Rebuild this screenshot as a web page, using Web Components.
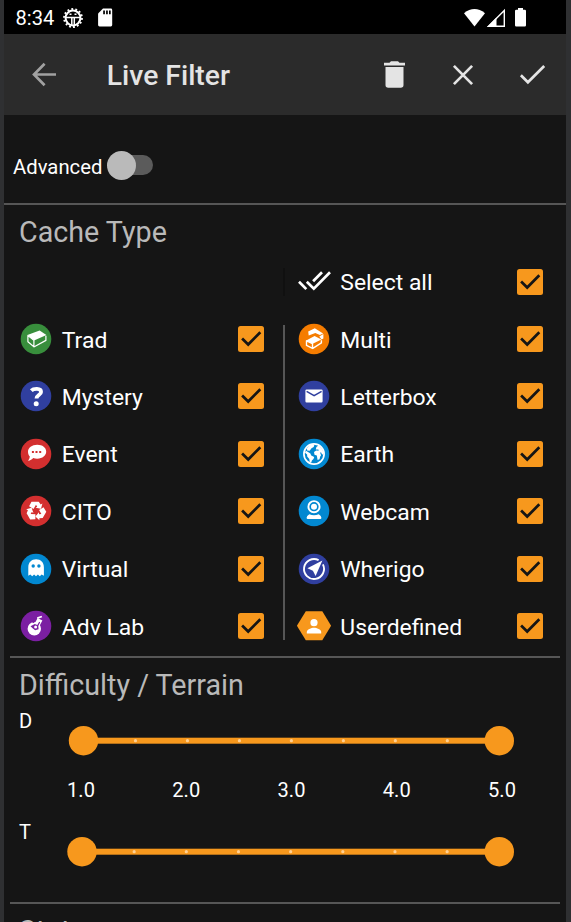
<!DOCTYPE html>
<html lang="en">
<head>
<meta charset="utf-8">
<title>Live Filter</title>
<style>
html,body{margin:0;height:100%;background:#151515}
body{font-family:Roboto,"Liberation Sans",sans-serif;color:#fff;overflow:hidden}
</style>
</head>
<body>
<filter-screen></filter-screen>
<script>
const define = (name, html, setup) => customElements.define(name, class extends HTMLElement {
  connectedCallback() {
    if (this.shadowRoot) return;
    const root = this.attachShadow({ mode: 'open' });
    const t = document.createElement('template');
    t.innerHTML = html;
    root.append(t.content.cloneNode(true));
    if (setup) setup(this, root);
  }
});

const ARROW = 'M11.5 6.7h7.2l2 2.7 1.7-1-1.4 5.4-5.4-1 1.6-1-1.2-2-2.5 4.1-4.4-2.6z';
const ICONS = {
  trad: ['#388e3c', '<path fill="#fff" d="M7.4 12 19.6 7.4l6.8 4.5-12.3 5.5z"/><path fill="none" stroke="#fff" stroke-width="1.2" stroke-linejoin="round" d="M7.900 12.600v6.200l6 5v-6.400zM14.300 23.800l11.600-6.400v-4.600"/>'],
  multi: ['#f57c00', '<path fill="#fff" d="m10.200 8.500 6.600-3.200 8.300 5.200-3.200 1.600-4.600-2-6.600 2.300zM8.200 17.400 16.600 13l6.800 3.600-8.700 4.100z"/><path fill="#fff" d="M21.300 13.400 25.400 11v4.400l-1.800 1.200z"/><path fill="none" stroke="#fff" stroke-width="1.400" stroke-linejoin="round" d="M8.500 17.800v4.600l6 3v-4.800zM14.800 25.300l8.600-5.400v-2.600"/>'],
  mystery: ['#303f9f', '<path fill="none" stroke="#fff" stroke-width="3.900" d="M11.300 10.700c2.200-2.300 9.700-3 9.700 1.200 0 3.300-4.500 3-4.500 6.700"/><circle cx="16.200" cy="23.700" r="2.500" fill="#fff"/>'],
  letterbox: ['#303f9f', '<path fill="#fff" d="M8.600 9.400h14.800q1.200 0 1.200 1.200v10.600q0 1.200-1.200 1.200H8.600q-1.200 0-1.200-1.200V10.600q0-1.200 1.200-1.200z"/><path fill="none" stroke="#303f9f" stroke-width="1.500" d="m8.600 11.300 7.500 4.300 7.500-4.300"/>'],
  event: ['#d32f2f', '<path fill="#fff" d="M17.200 6.800c5.300 0 9 2.900 9 6.800s-3.700 7.100-9 7.100c-1.500 0-2.800-.2-4-.6-1.100 1.400-2.900 2.500-5.200 2.700 1.100-1.200 1.700-2.700 1.800-4.200-1.300-1.200-1.800-3-1.800-5 0-3.800 4-6.800 9.200-6.800z"/><path fill="#d32f2f" d="M11.900 13h2v2h-2zM15.500 13h2v2h-2zM19.200 13h2v2h-2z"/>'],
  earth: ['#0288d1', '<circle cx="16" cy="16" r="10.100" fill="none" stroke="#fff" stroke-width="1.700"/><path fill="#fff" d="m8 12.800 4.400 2.700.8 2.100 3 1.400-.7 2-1.600 1.600-.7 2.200-1.500-.4-.4-3.400-2.100-2.600-.1-2L7 14.800zM9 10l3-2.700 2-1 2.500.3-.8 2.400-2.200 1.200-1.800 2.500-2.600-.1zM18.400 9.100l2.400-1.800 3.800 4.300.8 4.700-1.300.3-1.100-2.400-.9.5 1 2.500-.9 1.300-.7 2.700-1.900.7-.8-4.500-2.300-.7-.5-2.600 2.200-1.700 2.500.4-.3-1.300-2.600-.1z"/>'],
  cito: ['#d32f2f', [0, 120, 240].map(r => `<path fill="#fff" d="${ARROW}" transform="rotate(${r} 16 16)"/>`).join('')],
  webcam: ['#0288d1', '<circle cx="16" cy="11.700" r="5.600" fill="none" stroke="#fff" stroke-width="1.900"/><circle cx="16" cy="11.700" r="3" fill="#fff"/><path fill="#fff" d="M11.300 19.200q4.700 2 9.400 0 2.700 1.500 2.700 3.600 0 1.200-1.200 1.200H9.800q-1.200 0-1.200-1.200 0-2.100 2.700-3.600z"/>'],
  virtual: ['#0288d1', '<path fill="#fff" d="M8.300 22.800V14.500c0-5.200 3.200-8.200 7.800-8.200s7.800 3 7.800 8.200v8.300l-2.300-1.300-1.800 1.700-1.900-1.700-1.900 1.700-1.900-1.700-1.900 1.700-1.900-1.700z"/><circle cx="13.200" cy="13" r="1.700" fill="#0288d1"/><circle cx="18.900" cy="13" r="1.700" fill="#0288d1"/>'],
  wherigo: ['#303f9f', '<path fill="none" stroke="#fff" stroke-width="1.900" d="M20.600 7.100A10 10 0 1 0 24.900 11.400"/><path fill="#fff" d="M24.400 7.600 17.600 23l-2.700-5.200-5.500-2.500z"/>'],
  lab: ['#7b1fa2', '<circle cx="14.300" cy="18.700" r="6.700" fill="#fff"/><path fill="none" stroke="#fff" stroke-width="5.400" d="M15.500 17.600 20 9.300"/><path fill="none" stroke="#fff" stroke-width="1.700" d="m17.300 8.100 4.600-1.600"/><path fill="#7b1fa2" d="m10.500 16.200 4.300-2.300 2.500 1.200 1.900-3.400 1 .6-1.900 3.700.3 3.300-3.500 1-2.500-2z"/><circle cx="15.600" cy="17" r="1.500" fill="#fff"/><circle cx="13.400" cy="12" r="1.100" fill="#7b1fa2"/>'],
  user: [null, '<path fill="#f7981d" d="M7.800 1.300h16.500L33.100 15.800 24.300 30.300H7.800L-1.100 15.800z"/><circle cx="16" cy="12.700" r="3.600" fill="#fff"/><path fill="#fff" d="M8.800 23.500v-1.600c0-2.500 4.500-4.200 7.200-4.200s7.200 1.700 7.200 4.200v1.600z"/>'],
  all: [null, '<path fill="none" stroke="#fff" stroke-width="2.700" d="M1 15.800l7.300 7.300M8.800 15.800l7 6.800L32 6.300M15.100 15.300l8.900-9"/>']
};

define('cache-icon', `<style>:host{display:block;width:32px;height:32px}svg{display:block;overflow:visible}</style><svg width="32" height="32" viewBox="0 0 32 32"></svg>`, (el, root) => {
  const [bg, art] = ICONS[el.getAttribute('name')];
  root.querySelector('svg').innerHTML = (bg ? `<circle cx="16" cy="16" r="15.300" fill="${bg}"/>` : '') + art;
});

define('check-mark', `<style>:host{display:block;width:26px;height:26px}svg{display:block}</style>
<svg width="26" height="26" viewBox="0 0 26 26"><rect width="26" height="26" rx="2.500" fill="#f7981d"/><path fill="none" stroke="#151515" stroke-width="2.700" d="m4.100 12.500 6.100 6L22.300 6.300"/></svg>`);

define('type-row', `<style>
:host{display:flex;align-items:center;height:57.400px;font-size:22.900px;line-height:28px}
span{flex:1;margin-left:10.300px;padding-top:3px;white-space:nowrap}
</style><span><slot></slot></span><check-mark></check-mark>`, (el, root) => {
  const icon = document.createElement('cache-icon');
  icon.setAttribute('name', el.getAttribute('icon'));
  root.querySelector('span').before(icon);
});

define('status-bar', `<style>
:host{display:flex;height:34px;background:#000;align-items:center;font-size:20.100px;line-height:24px;box-sizing:border-box;padding:1px 40px 0 11.500px}
.clock{width:47.500px;padding-top:1px}.grow{flex:1}svg{display:block;overflow:visible}
</style>
<span class="clock">8:34</span>
<svg width="20" height="20" viewBox="0 0 20 20"><circle cx="10" cy="10" r="7.400" fill="none" stroke="#fff" stroke-width="2"/><circle cx="10" cy="10" r="9" fill="none" stroke="#fff" stroke-width="1.800" stroke-dasharray="1.900 2.140"/><path fill="none" stroke="#fff" stroke-width="1.500" d="M2.500 9.500h15M8.800 10v7.500M11.300 10v7.500"/><path fill="#fff" d="M6.500 5.500h2V7h-2zM11.500 5.500h2V7h-2z"/></svg>
<svg style="margin-left:15px" width="15" height="19" viewBox="0 0 15 19"><path fill="#fff" d="M5 .5h7.800q1.400 0 1.400 1.400v15.200q0 1.400-1.400 1.400H1.500Q.1 18.500.1 17.100V5.400z"/><path fill="#000" d="M5.200 2.500h1.700v3.800H5.200zM8.100 2.500h1.700v3.800H8.100zM11 2.500h1.700v3.800H11z"/></svg>
<span class="grow"></span>
<svg style="margin-right:2px" width="21" height="18" viewBox="0 0 21 18"><path fill="#fff" d="M0 4.200Q10.500-4 21 4.200L10.500 17.500z"/></svg>
<svg style="margin-right:10px" width="18" height="18" viewBox="0 0 18 18"><path fill="none" stroke="#fff" stroke-width="1.400" d="M1.500 17.300H17.300V1.500z"/><path fill="#fff" d="M0 18 9.500 8.500V18z"/></svg>
<svg width="11" height="19" viewBox="0 0 11 19"><path fill="#fff" d="M3 0h5v1.800h1.800q1.200 0 1.200 1.200v14.300q0 1.200-1.200 1.200H1.200Q0 18.500 0 17.300V3q0-1.200 1.200-1.200H3z"/></svg>`);

define('app-bar', `<style>
:host{display:flex;height:81px;background:#2b2b2b;align-items:center;box-sizing:border-box;padding:0 21.500px 0 28px}
h1{margin:3px 0 0 50.800px;font-size:28.300px;line-height:32px;font-weight:500;flex:1;color:#e4e4e4}
svg{display:block;overflow:visible}
</style>
<svg width="24" height="23" viewBox="0 0 24 23"><path fill="none" stroke="#a1a1a1" stroke-width="2.700" d="M24 11.500H2.500M12.600.8 2 11.500l10.600 10.700"/></svg>
<h1><slot></slot></h1>
<svg style="margin-right:48px" width="21" height="27" viewBox="0 0 21 27"><path fill="#e4e4e4" d="M0 1.800h5.500L7 .2h7l1.500 1.600H21v2.700H0zM1.500 6h18v18q0 2.700-2.700 2.700H4.200q-2.700 0-2.700-2.700z"/></svg>
<svg style="margin-right:47px" width="20" height="20" viewBox="0 0 20 20"><path fill="none" stroke="#e4e4e4" stroke-width="2.700" d="m.9.900 18.200 18.200M19.100.9.900 19.100"/></svg>
<svg width="25" height="19" viewBox="0 0 25 19"><path fill="none" stroke="#e4e4e4" stroke-width="2.700" d="m.9 10.300 7 7L24.200 1"/></svg>`);

define('toggle-row', `<style>
:host{display:flex;align-items:center;height:88px;padding:12.500px 0 0 9px;box-sizing:border-box;font-size:20.300px;line-height:24px}
span{padding-top:4px}
.sw{width:46px;height:29px;margin-left:5px;display:flex;align-items:center}
.knob{width:29px;height:29px;border-radius:50%;background:#bababa;flex:none;z-index:1}
.track{width:31px;height:20px;border-radius:0 10px 10px 0;background:#5b5b5b;margin-left:-14px;flex:none}
</style><span><slot></slot></span><div class="sw"><div class="knob"></div><div class="track"></div></div>`);

define('filter-section', `<style>
:host{display:block;border-top:2px solid #565656;margin:0 6px}
:host([full]){margin:0}
h2{margin:0;padding:10px 0 4.500px 9px;height:34px;font-size:28.700px;line-height:34px;font-weight:400;color:#b9b9b9;white-space:nowrap}
:host([full]) h2{padding-left:15px}
</style><h2></h2><slot></slot>`, (el, root) => root.querySelector('h2').textContent = el.getAttribute('heading'));

define('type-grid', `<style>
:host{display:grid;grid-template-columns:279px 2px 1fr;height:402.500px}
.l{padding:57.400px 19.500px 0 15.500px}.r{padding:0 23px 0 13px}
.l,.r{margin-top:-.500px}
.v{background:linear-gradient(#101010,#101010) 0 14px/2px 28px no-repeat,linear-gradient(#565656,#565656) 0 71.500px/2px 315px no-repeat}
</style><div class="l"><slot name="left"></slot></div><div class="v"></div><div class="r"><slot name="right"></slot></div>`);

define('range-slider', `<style>
:host{display:flex;height:56px;font-size:20.100px;line-height:24px}
span{width:20px;padding:1px 0 0 9px;flex:none}
svg{display:block;overflow:visible}
</style><span><slot></slot></span><svg width="500" height="56"></svg>`, (el, root) => {
  // The drawing starts 39px from the screen edge.
  const a = +el.getAttribute('start') - 39, b = 460.3, y = 32.7;
  let s = `<rect x="${a}" y="${y - 3}" width="${b - a}" height="6" fill="#f7981d"/>`;
  for (let i = 1; i < 8; i++) s += `<circle cx="${a + (b - a) * i / 8}" cy="${y}" r="1.600" fill="#ffd093"/>`;
  s += `<circle cx="${a}" cy="${y}" r="14.700" fill="#f7981d"/><circle cx="${b}" cy="${y}" r="14.700" fill="#f7981d"/>`;
  root.querySelector('svg').innerHTML = s;
});

define('scale-labels', `<style>
:host{display:flex;justify-content:space-between;width:457px;margin-left:53px;height:55px;font-size:20.100px;line-height:24px;padding-top:14px;box-sizing:border-box}
span{width:36px;text-align:center}
</style><span>1.0</span><span>2.0</span><span>3.0</span><span>4.0</span><span>5.0</span>`);

define('filter-screen', `<style>
:host{display:block;box-sizing:border-box;width:571px;height:922px;overflow:hidden;background:#151515;border-left:4px solid #2f3032;border-right:5px solid #2f3032}
.sliders{padding-top:1.500px;height:195.500px;box-sizing:border-box}
</style>
<status-bar></status-bar>
<app-bar>Live Filter</app-bar>
<toggle-row>Advanced</toggle-row>
<filter-section full heading="Cache Type">
 <type-grid>
  <type-row slot="left" icon="trad">Trad</type-row>
  <type-row slot="left" icon="mystery">Mystery</type-row>
  <type-row slot="left" icon="event">Event</type-row>
  <type-row slot="left" icon="cito">CITO</type-row>
  <type-row slot="left" icon="virtual">Virtual</type-row>
  <type-row slot="left" icon="lab">Adv Lab</type-row>
  <type-row slot="right" icon="all">Select all</type-row>
  <type-row slot="right" icon="multi">Multi</type-row>
  <type-row slot="right" icon="letterbox">Letterbox</type-row>
  <type-row slot="right" icon="earth">Earth</type-row>
  <type-row slot="right" icon="webcam">Webcam</type-row>
  <type-row slot="right" icon="wherigo">Wherigo</type-row>
  <type-row slot="right" icon="user">Userdefined</type-row>
 </type-grid>
</filter-section>
<filter-section heading="Difficulty / Terrain">
 <div class="sliders">
  <range-slider start="83.500">D</range-slider>
  <scale-labels></scale-labels>
  <range-slider start="82">T</range-slider>
 </div>
</filter-section>
<filter-section heading="Status"></filter-section>`);
</script>
</body>
</html>
